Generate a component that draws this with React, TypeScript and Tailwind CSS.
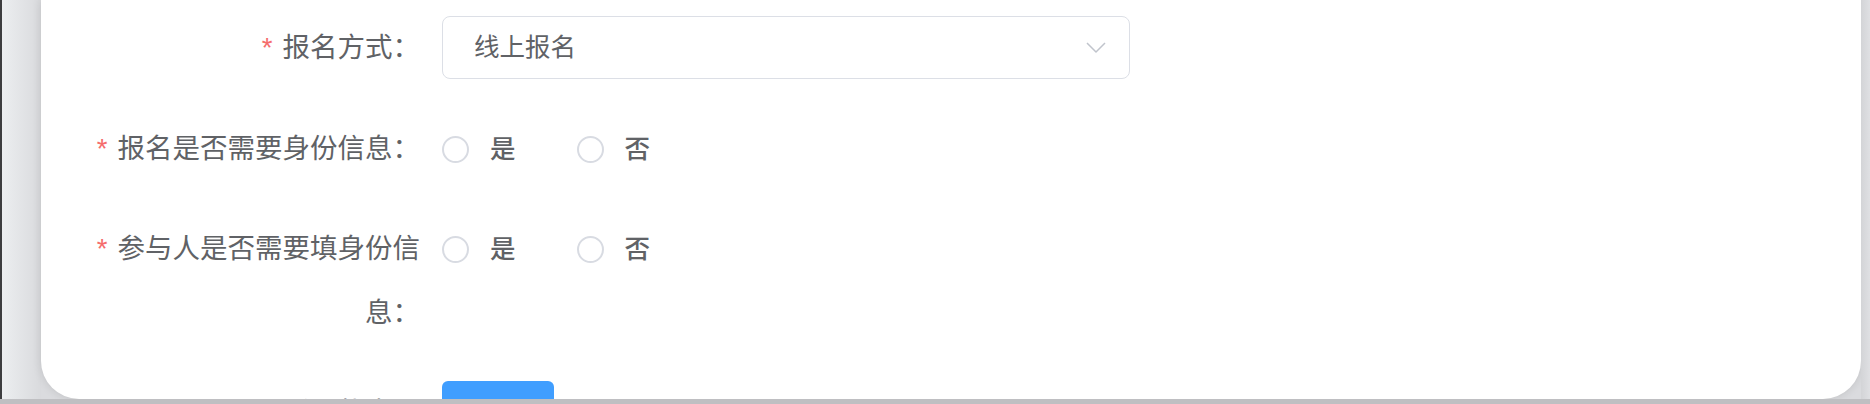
import React from "react";

const FONT = {
  fontFamily: '"Liberation Sans", "Noto Sans CJK SC", sans-serif',
};

function Label({ text, required = true }: { text: string; required?: boolean }) {
  return (
    <div className="w-[361px] shrink-0 pr-[22px] text-right text-[27.5px] leading-[64px] text-[#606266]">
      {required && <span className="mr-[10px] text-[#f56c6c]">*</span>}
      {text}
    </div>
  );
}

function Radio({ label }: { label: string }) {
  return (
    <label className="mr-[61px] flex h-[64px] cursor-pointer items-center">
      <span className="h-[27px] w-[27px] rounded-full border-2 border-[#d8dbe2] bg-white" />
      <span className="ml-[21px] text-[25.5px] font-medium text-[#606266]">{label}</span>
    </label>
  );
}

function YesNo() {
  return (
    <div className="flex items-start">
      <Radio label="是" />
      <Radio label="否" />
    </div>
  );
}

export default function App() {
  return (
    <div
      className="flex h-[404px] w-[1870px] flex-col overflow-hidden bg-[#dadbde]"
      style={FONT}
    >
      <div className="flex h-[399px]">
        <div className="w-[2px] bg-[#3d3d3f]" />
        <div className="w-[39px] bg-gradient-to-r from-[#eceef0] to-[#d9dadd]" />

        {/* form card */}
        <div className="w-[1820px] overflow-hidden rounded-b-[38px] bg-white pl-[40px] pt-[16px] shadow-[0_0_10px_rgba(0,0,0,0.12)]">
          <div className="mb-[37px] flex">
            <Label text="报名方式：" />
            <div className="flex h-[63px] w-[688px] items-center justify-between rounded-[8px] border-[1.5px] border-[#dcdfe6] pl-[31px] pr-[23px]">
              <span className="text-[25.5px] text-[#606266]">线上报名</span>
              <svg width="20" height="11" viewBox="0 0 20 11" fill="none">
                <polyline
                  points="1,1 10,10 19,1"
                  stroke="#c0c4cc"
                  strokeWidth="1.5"
                  strokeLinejoin="round"
                />
              </svg>
            </div>
          </div>

          <div className="mb-[36px] flex">
            <Label text="报名是否需要身份信息：" />
            <YesNo />
          </div>

          <div className="mb-[36px] flex">
            <Label text="参与人是否需要填身份信息：" />
            <YesNo />
          </div>

          <div className="flex">
            <Label text="活动状态：" required={false} />
            <button className="h-[63px] w-[112px] rounded-[6px] bg-[#409eff]" />
          </div>
        </div>

        <div className="flex-1 bg-gradient-to-r from-[#d3d4d7] to-[#dfe0e3]" />
      </div>
      <div className="h-[5px] bg-[#bfbfc2]" />
    </div>
  );
}
